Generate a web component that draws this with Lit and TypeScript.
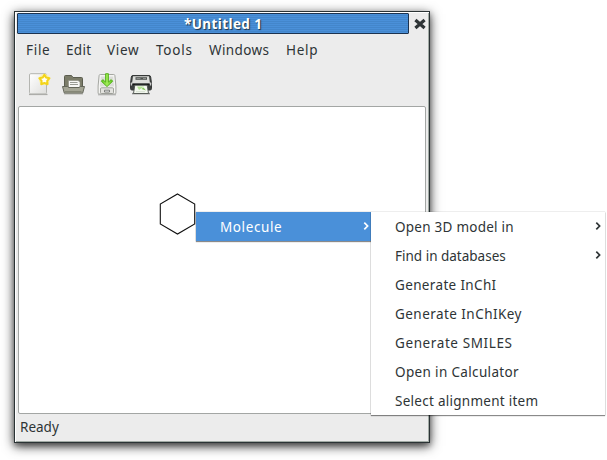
import { LitElement, html, css, svg } from "lit";
import { customElement } from "lit/decorators.js";
import { styleMap } from "lit/directives/style-map.js";

type Label = { text: string; width: number; spacing: number; sub?: boolean };

const MENUS: Label[] = [
  { text: "File", width: 40, spacing: 0.7 },
  { text: "Edit", width: 41, spacing: 0.3 },
  { text: "View", width: 49, spacing: 0.7 },
  { text: "Tools", width: 53, spacing: 0.8 },
  { text: "Windows", width: 77, spacing: 0.4 },
  { text: "Help", width: 40, spacing: 0.7 },
];

const ACTIONS: Label[] = [
  { text: "Open 3D model in", width: 119, spacing: 0.25, sub: true },
  { text: "Find in databases", width: 111, spacing: 0, sub: true },
  { text: "Generate InChI", width: 102, spacing: 0.35 },
  { text: "Generate InChIKey", width: 128, spacing: 0.45 },
  { text: "Generate SMILES", width: 118, spacing: 0.6 },
  { text: "Open in Calculator", width: 124, spacing: 0.35 },
  { text: "Select alignment item", width: 143, spacing: 0.27 },
];

const arrow = html`<svg class="arrow" width="6" height="10" viewBox="0 0 6 10">
  <path d="M1.3 1.7 4.6 5 1.3 8.3" fill="none" stroke="currentColor" stroke-width="1.7" />
</svg>`;

const icon = (body: unknown) =>
  html`<svg class="icon" width="24" height="24" viewBox="0 0 24 24">${body}</svg>`;

const newIcon = svg`
  <defs><linearGradient id="paper" x2="1" y2="1"><stop stop-color="#fff"/><stop offset="1" stop-color="#dededc"/></linearGradient></defs>
  <path d="M2 22.5h18.5" stroke="#a9a9a6" stroke-width="1.2"/>
  <rect x="2.5" y="1.7" width="17" height="20.2" rx="1.2" fill="url(#paper)" stroke="#b4b5b1"/>
  <circle cx="17.4" cy="7.4" r="5.6" fill="#fff3a0" opacity=".8"/>
  <path d="M17.4 2.7l1.6 2.8 3.5.7-2.3 2.7.4 3.3-3.2-1.2-3.2 1.2.4-3.3-2.3-2.7 3.5-.7z" fill="#fffef0" stroke="#f3d41a" stroke-width="2" stroke-linejoin="round"/>`;

const openIcon = svg`
  <path d="M3 22h19" stroke="#b5b5b0"/>
  <path d="M3.5 16V4.5q0-1 1-1h6l1.5 2h8.5q1 0 1 1V16z" fill="#7b7c69" stroke="#5b5d4f"/>
  <path d="M7.5 16V8.5h9.5l2 1.5v6z" fill="#f7f7f5" stroke="#888a7d" stroke-width=".6"/>
  <path d="M9 10.5h7.5M9 12.5h8" stroke="#999b94"/>
  <path d="M1.5 14.5h5l1.5 1h10l1.5-1h4l-1.8 6.6H3.3z" fill="#a5a696" stroke="#64665a" stroke-linejoin="round"/>
  <path d="M4 19.5h16.5" stroke="#858777"/>`;

const saveIcon = svg`
  <defs><linearGradient id="arrowfill" x2="1"><stop stop-color="#5cc41c"/><stop offset=".5" stop-color="#a2ec58"/><stop offset="1" stop-color="#5cc41c"/></linearGradient></defs>
  <path d="M3 22.8h18" stroke="#aaa"/>
  <path d="M5.3 2.5h13.4q1 0 1.2 1l1 10.5v7q0 1-1 1H4.1q-1 0-1-1v-7l1-10.5q.2-1 1.2-1z" fill="#f4f4f2" stroke="#a5a7a2"/>
  <path d="M5.8 4.5h12.4l.8 10H5z" fill="#dcddd9"/>
  <rect x="5.5" y="15.8" width="13" height="5.7" rx="1" fill="#e3e3df" stroke="#969892" stroke-width=".9"/>
  <path d="M9.5 18.2v1.8h5v-1.8z" fill="#fff" stroke="#71736f" stroke-width=".9"/>
  <path d="M10.6 1.7h2.8v8.4l2.8-2.5 1.5 1.6-5.7 5.4-5.7-5.4 1.5-1.6 2.8 2.5z" fill="url(#arrowfill)" stroke="#4fae14" stroke-width=".9" stroke-linejoin="round"/>`;

const printIcon = svg`
  <path d="M3 21.6h18" stroke="#888" stroke-width="1.4"/>
  <path d="M4 3.5h16q1.5 0 1.7 1.5l.8 6.5v5q0 1.5-1.5 1.5H3q-1.5 0-1.5-1.5v-5L2.3 5q.2-1.5 1.7-1.5z" fill="#3c3f3e" stroke="#363938"/>
  <path d="M4 4.3h16l1 7.2H3z" fill="#dcdeda"/>
  <path d="M6.5 5.2h11.5v2.6h-11.5z" fill="#515452"/>
  <path d="M7.5 6.5h4M14 6.5h3" stroke="#8e908d"/>
  <path d="M2.3 10.5v3M21.7 10.5v3" stroke="#eee"/>
  <path d="M4 12.4h16" stroke="#151817" stroke-width="1.6"/>
  <path d="M5.8 13.2h12.4l1.3 8.3h-15z" fill="#f3f8ef" stroke="#4b504c" stroke-width=".9"/>
  <path d="M8 14.5h7l-5 3.5z" fill="#b3e394"/>
  <path d="M12.5 17l2-1.5 2.5 3z" fill="#80c959"/>
  <path d="M7 19.7h9" stroke="#d5dfd1"/>`;

@customElement("app-root")
export class AppRoot extends LitElement {
  static styles = css`
    :host {
      display: block;
      position: relative;
      width: 607px;
      height: 460px;
      overflow: hidden;
      background: #fff;
      color: #2e3436;
      font: 13.5px/20px "Noto Sans", "Open Sans", sans-serif;
      white-space: nowrap;
    }
    svg { display: block; }
    .window {
      position: absolute;
      left: 14px;
      top: 11px;
      width: 416px;
      height: 432px;
      box-sizing: border-box;
      display: flex;
      flex-direction: column;
      padding: 1px 2px 0 2px;
      border: 1px solid #2b3335;
      background: #ececec;
      box-shadow: inset 1px 1px #fff, inset -1px -1px #a2aba5,
        0 3px 11px rgba(0, 0, 0, 0.75), 0 3px 5px rgba(0, 0, 0, 0.3);
    }
    .titlebar { display: flex; align-items: center; height: 21px; }
    .title {
      flex: none;
      box-sizing: border-box;
      width: 392px;
      height: 21px;
      border: 1px solid #1c3350;
      border-radius: 1px;
      background: repeating-linear-gradient(#4a90d9 0 1px, #4386cb 1px 2px);
      color: #fff;
      font-weight: 700;
      line-height: 20px;
      letter-spacing: 0.4px;
      padding-left: 166px;
      text-shadow: 1px 1px 1px #1d3247;
    }
    .close { margin-left: 5px; }
    .menubar { display: flex; height: 32px; padding: 6px 0 0 9px; box-sizing: border-box; }
    .toolbar { display: flex; gap: 10px; height: 40px; box-sizing: border-box; padding: 6px 0 0 10px; }
    .canvas {
      box-sizing: border-box;
      width: 408px;
      height: 308px;
      margin-left: 1px;
      border: 1px solid #a3a6a4;
      border-radius: 2px;
      background: #fff;
      padding: 86px 0 0 140px;
    }
    .status { padding: 3px 0 0 3px; }
    .menu {
      position: absolute;
      box-sizing: border-box;
      background: #fff;
      box-shadow: 0 1px 1px rgba(0, 0, 0, 0.42), 0 0 1px rgba(0, 0, 0, 0.4);
    }
    .parent { left: 196px; top: 212px; width: 175px; background: #4a90d9; color: #fff; }
    .parent .item { padding-right: 2px; }
    .child { left: 371px; top: 212px; width: 234px; height: 203px; }
    .item {
      display: flex;
      align-items: center;
      justify-content: space-between;
      height: 29px;
      padding: 0 4px 0 24px;
      box-sizing: border-box;
    }
    .arrow { margin-top: -1px; }
  `;

  private label(l: Label) {
    return html`<span style=${styleMap({ width: `${l.width}px`, letterSpacing: `${l.spacing}px` })}>${l.text}</span>`;
  }

  render() {
    return html`
      <div class="window">
        <div class="titlebar">
          <div class="title">*Untitled 1</div>
          <svg class="close" width="12" height="12" viewBox="0 0 12 12">
            <path d="M1.4 2 10.6 10M10.6 2 1.4 10" stroke="#2e3436" stroke-width="3.2" />
          </svg>
        </div>
        <div class="menubar">${MENUS.map((m) => this.label(m))}</div>
        <div class="toolbar">${[newIcon, openIcon, saveIcon, printIcon].map(icon)}</div>
        <div class="canvas">
          <svg width="38" height="42" viewBox="0 0 38 42">
            <path d="M18.5 1 35.7 11V31L18.5 41 1.3 31V11Z" fill="none" stroke="#111" stroke-width="1.1" />
          </svg>
        </div>
        <div class="status">Ready</div>
      </div>
      <div class="menu parent">
        <div class="item">${this.label({ text: "Molecule", width: 64, spacing: 0.6 })}${arrow}</div>
      </div>
      <div class="menu child">
        ${ACTIONS.map((a) => html`<div class="item">${this.label(a)}${a.sub ? arrow : ""}</div>`)}
      </div>
    `;
  }
}
